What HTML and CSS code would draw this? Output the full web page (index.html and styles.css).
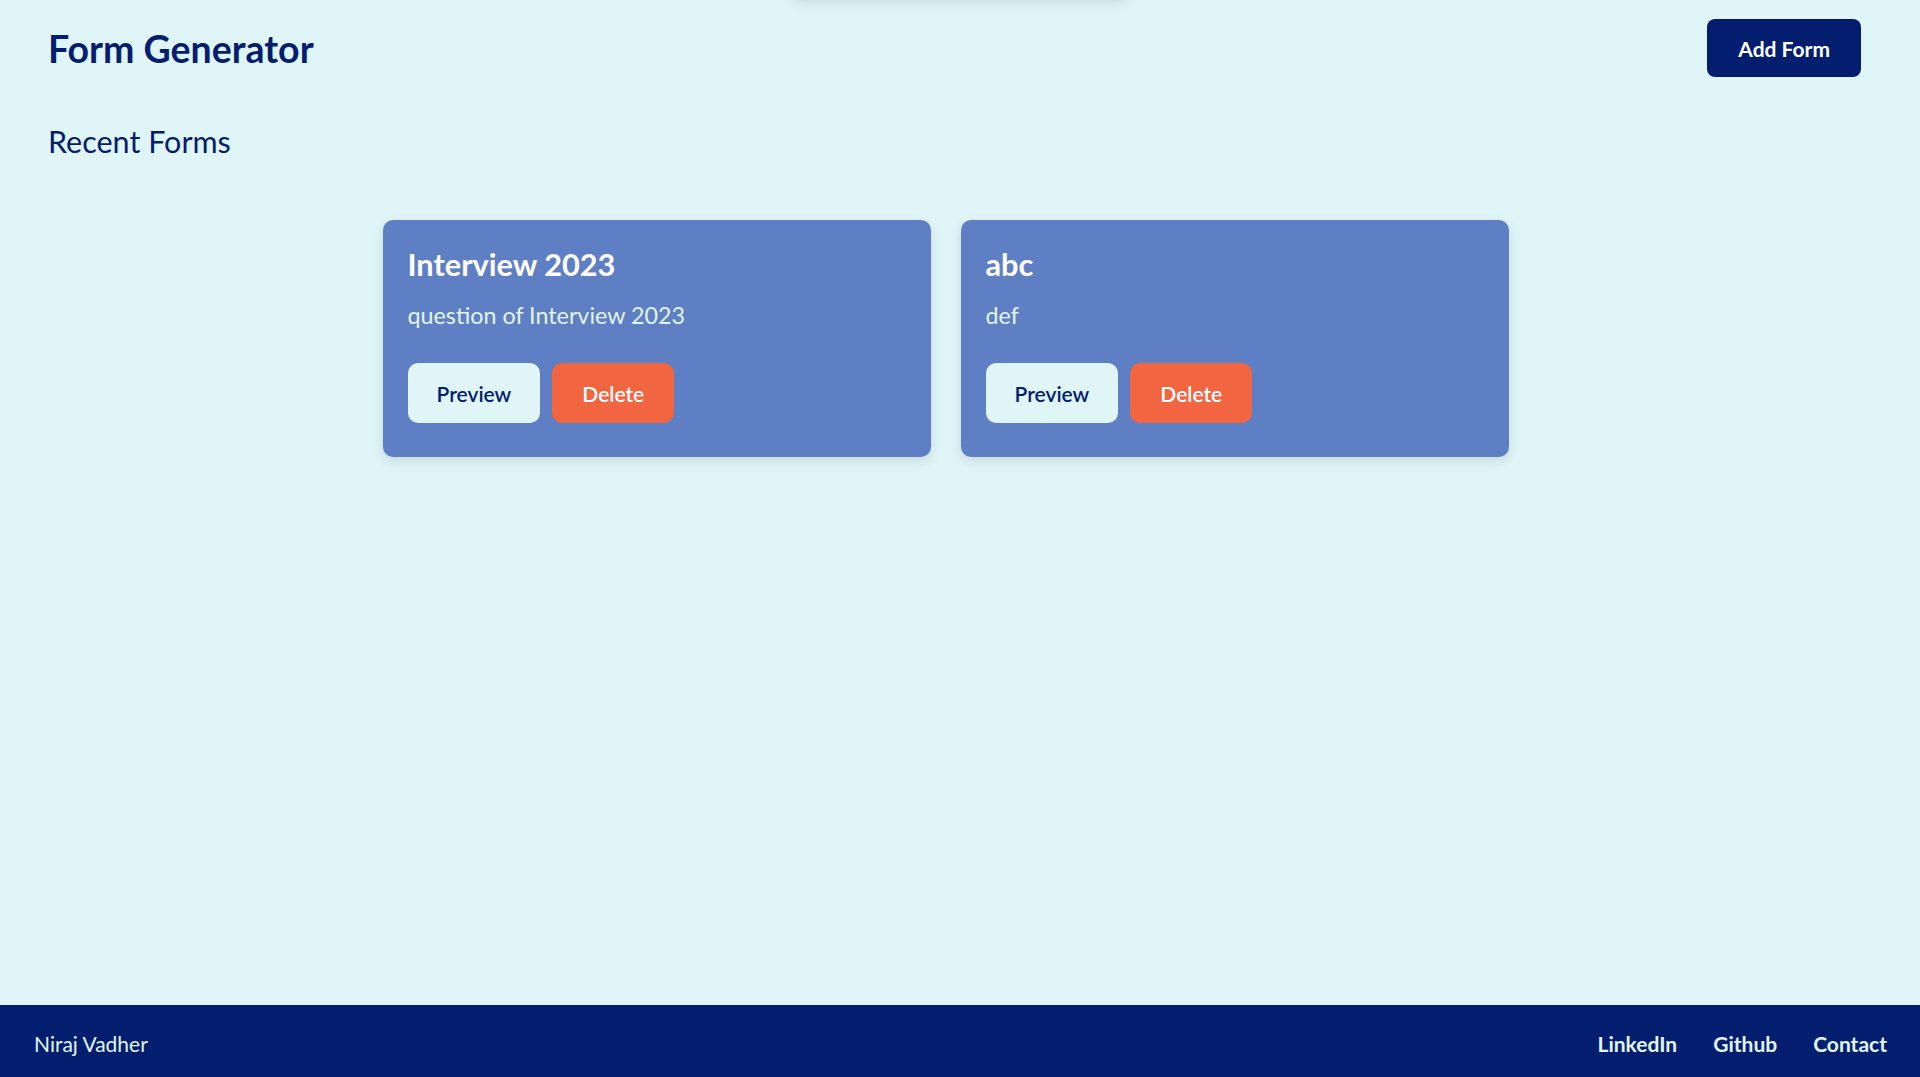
FILE: index.html
```html
<!DOCTYPE html>
<html lang="en">
<head>
<meta charset="utf-8">
<title>Form Generator</title>
<link rel="stylesheet" href="styles.css">
</head>
<body>
<div class="top-shadow"></div>
<div class="page">
  <header class="header">
    <h1 class="brand">Form Generator</h1>
    <button class="btn btn-add">Add Form</button>
  </header>
  <main class="main">
    <h2 class="section-title">Recent Forms</h2>
    <div class="cards">
      <div class="card">
        <h3 class="card-title">Interview 2023</h3>
        <p class="card-desc">question of Interview 2023</p>
        <div class="card-actions">
          <button class="btn btn-preview">Preview</button>
          <button class="btn btn-delete">Delete</button>
        </div>
      </div>
      <div class="card">
        <h3 class="card-title">abc</h3>
        <p class="card-desc">def</p>
        <div class="card-actions">
          <button class="btn btn-preview">Preview</button>
          <button class="btn btn-delete">Delete</button>
        </div>
      </div>
    </div>
  </main>
  <footer class="footer">
    <span class="footer-name">Niraj Vadher</span>
    <nav class="footer-links">
      <a href="#">LinkedIn</a>
      <a href="#">Github</a>
      <a href="#">Contact</a>
    </nav>
  </footer>
</div>
</body>
</html>
```
FILE: styles.css
```css
* { box-sizing: border-box; }
html, body { margin: 0; padding: 0; }
body {
  background: #e0f5f8;
  font-family: Lato, "Open Sans", sans-serif;
  color: #031e6f;
  overflow: hidden;
}
.top-shadow {
  position: absolute;
  top: -60px;
  left: 793px;
  width: 334px;
  height: 60px;
  background: #e0f5f8;
  box-shadow: 0 2px 12px rgba(0, 40, 60, 0.12);
}
.page {
  min-height: 100vh;
  display: flex;
  flex-direction: column;
}
.header {
  display: flex;
  justify-content: space-between;
  align-items: center;
  padding: 19px 59px 0 48px;
}
.brand {
  margin: 0;
  font-size: 37.5px;
  line-height: 1.2;
  font-weight: 700;
  color: #031e6f;
}
.btn {
  border: none;
  font-family: inherit;
  cursor: pointer;
  border-radius: 10px;
}
.btn-add {
  height: 58px;
  padding: 0 31px;
  background: #031e6f;
  color: #ffffff;
  font-size: 21px;
  font-weight: 700;
  border-radius: 8px;
}
.main {
  flex: 1;
}
.section-title {
  margin: 46px 0 0 48px;
  font-size: 30.5px;
  line-height: 1.2;
  font-weight: 400;
  color: #031e6f;
}
.cards {
  display: flex;
  justify-content: center;
  gap: 30px;
  padding-right: 29px;
  margin-top: 60px;
}
.card {
  width: 548px;
  background: #5f7fc5;
  border-radius: 10px;
  padding: 27px 24px 34px 25px;
  box-shadow: 0 4px 12px rgba(0, 30, 60, 0.12);
}
.card-title {
  margin: 0;
  font-size: 30.7px;
  line-height: 1.2;
  font-weight: 700;
  color: #ffffff;
}
.card-desc {
  margin: 19px 0 33px;
  font-size: 23.3px;
  line-height: 1.2;
  font-weight: 400;
  color: #e0f5f8;
}
.card-actions {
  display: flex;
  gap: 12px;
}
.btn-preview, .btn-delete {
  height: 60px;
  padding: 0 29px;
  font-size: 21px;
  font-weight: 600;
}
.btn-delete {
  padding: 0 30px;
}
.btn-preview {
  background: #e0f5f8;
  color: #031e6f;
}
.btn-delete {
  background: #f26541;
  color: #ffffff;
}
.footer {
  height: 72px;
  background: #031e6f;
  display: flex;
  justify-content: space-between;
  align-items: center;
  padding: 4px 33px 0 34px;
  color: #e0f5f8;
  font-size: 21px;
}
.footer-links {
  display: flex;
  gap: 36px;
}
.footer-links a {
  color: #e0f5f8;
  text-decoration: none;
  font-weight: 700;
}
```
